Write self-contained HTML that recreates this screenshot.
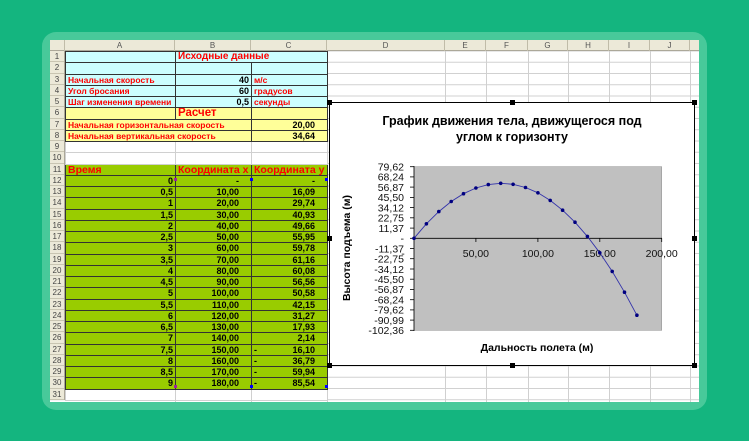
<!DOCTYPE html>
<html><head><meta charset="utf-8"><style>
*{margin:0;padding:0;box-sizing:border-box}
body{width:749px;height:441px;background:#14b57f;position:relative;overflow:hidden;font-family:"Liberation Sans",Arial,sans-serif}
#frame{position:absolute;left:42px;top:32px;width:665px;height:378px;background:#48c99a;border-radius:14px}
#sheet{position:absolute;left:50px;top:40px;width:649px;height:362px;background:#fff;overflow:hidden;
background-image:linear-gradient(#d0d0d0 1px,transparent 1px);background-size:100% 11.26px;background-position:0 10.5px}
.vl{position:absolute;top:0;height:362px;width:1px;background:#d0d0d0}
#colh{position:absolute;left:0;top:0;height:11px;width:649px;background:#ece9d8;border-bottom:1px solid #aca899;font-size:8px;color:#555}
#colh div{position:absolute;top:0;height:11px;line-height:11px;text-align:center;border-right:1px solid #c0bca8}
#rowh{position:absolute;left:0;top:11px;width:15px;background:#ece9d8;border-right:1px solid #aca899}
#rowh div{height:11.26px;line-height:11.26px;font-size:8px;color:#444;text-align:center;border-bottom:1px solid #c9c5b2}
table{position:absolute;left:15px;top:11px;width:262px;border-collapse:collapse;table-layout:fixed}
td{height:11.26px;padding:0 2px;font-size:9px;font-weight:bold;white-space:nowrap;overflow:hidden;line-height:10px;border:1px solid #333}
.c{background:#ccffff}.y{background:#ffff99}.g{background:#99cc00}.w{background:#fff;border-color:#d0d0d0}
.r{color:#f00}.n{text-align:right}
.c.r,.y.r{font-size:8.5px}
.p{padding-right:12px}
</style></head><body>
<div id="frame"></div>
<div id="sheet">
<div class="vl" style="left:125px"></div><div class="vl" style="left:201px"></div><div class="vl" style="left:277px"></div><div class="vl" style="left:395px"></div><div class="vl" style="left:436px"></div><div class="vl" style="left:478px"></div><div class="vl" style="left:518px"></div><div class="vl" style="left:559px"></div><div class="vl" style="left:600px"></div><div class="vl" style="left:640px"></div>
<div id="colh">
<div style="left:0;width:15px"></div><div style="left:15px;width:110px">A</div><div style="left:125px;width:76px">B</div><div style="left:201px;width:76px">C</div><div style="left:277px;width:118px">D</div><div style="left:395px;width:41px">E</div><div style="left:436px;width:42px">F</div><div style="left:478px;width:40px">G</div><div style="left:518px;width:41px">H</div><div style="left:559px;width:41px">I</div><div style="left:600px;width:40px">J</div>
</div>
<div id="rowh">
<div>1</div><div>2</div><div>3</div><div>4</div><div>5</div><div>6</div><div>7</div><div>8</div><div>9</div><div>10</div><div>11</div><div>12</div><div>13</div><div>14</div><div>15</div><div>16</div><div>17</div><div>18</div><div>19</div><div>20</div><div>21</div><div>22</div><div>23</div><div>24</div><div>25</div><div>26</div><div>27</div><div>28</div><div>29</div><div>30</div><div>31</div>
</div>
<table>
<colgroup><col style="width:110px"><col style="width:76px"><col style="width:76px"></colgroup>
<tr><td class="c"></td><td class="c r" colspan="2" style="font-size:10px;overflow:visible">Исходные данные</td></tr>
<tr><td class="c"></td><td class="c"></td><td class="c"></td></tr>
<tr><td class="c r">Начальная скорость</td><td class="c n">40</td><td class="c r">м/с</td></tr>
<tr><td class="c r">Угол бросания</td><td class="c n">60</td><td class="c r">градусов</td></tr>
<tr><td class="c r">Шаг изменения времени</td><td class="c n">0,5</td><td class="c r">секунды</td></tr>
<tr><td class="y"></td><td class="y r" style="font-size:11.5px">Расчет</td><td class="y"></td></tr>
<tr><td class="y r" colspan="2">Начальная горизонтальная скорость</td><td class="y n p">20,00</td></tr>
<tr><td class="y r" colspan="2">Начальная вертикальная скорость</td><td class="y n p">34,64</td></tr>
<tr><td class="w"></td><td class="w"></td><td class="w"></td></tr>
<tr><td class="w"></td><td class="w"></td><td class="w"></td></tr>
<tr><td class="g r" style="font-size:10.5px">Время</td><td class="g r" style="font-size:10.5px">Координата x</td><td class="g r" style="font-size:10.5px">Координата y</td></tr>
<tr><td class="g n">0</td><td class="g n p">-</td><td class="g n p">-</td></tr>
<tr><td class="g n">0,5</td><td class="g n p">10,00</td><td class="g n p">16,09</td></tr>
<tr><td class="g n">1</td><td class="g n p">20,00</td><td class="g n p">29,74</td></tr>
<tr><td class="g n">1,5</td><td class="g n p">30,00</td><td class="g n p">40,93</td></tr>
<tr><td class="g n">2</td><td class="g n p">40,00</td><td class="g n p">49,66</td></tr>
<tr><td class="g n">2,5</td><td class="g n p">50,00</td><td class="g n p">55,95</td></tr>
<tr><td class="g n">3</td><td class="g n p">60,00</td><td class="g n p">59,78</td></tr>
<tr><td class="g n">3,5</td><td class="g n p">70,00</td><td class="g n p">61,16</td></tr>
<tr><td class="g n">4</td><td class="g n p">80,00</td><td class="g n p">60,08</td></tr>
<tr><td class="g n">4,5</td><td class="g n p">90,00</td><td class="g n p">56,56</td></tr>
<tr><td class="g n">5</td><td class="g n p">100,00</td><td class="g n p">50,58</td></tr>
<tr><td class="g n">5,5</td><td class="g n p">110,00</td><td class="g n p">42,15</td></tr>
<tr><td class="g n">6</td><td class="g n p">120,00</td><td class="g n p">31,27</td></tr>
<tr><td class="g n">6,5</td><td class="g n p">130,00</td><td class="g n p">17,93</td></tr>
<tr><td class="g n">7</td><td class="g n p">140,00</td><td class="g n p">2,14</td></tr>
<tr><td class="g n">7,5</td><td class="g n p">150,00</td><td class="g n p"><span style="float:left">-</span>16,10</td></tr>
<tr><td class="g n">8</td><td class="g n p">160,00</td><td class="g n p"><span style="float:left">-</span>36,79</td></tr>
<tr><td class="g n">8,5</td><td class="g n p">170,00</td><td class="g n p"><span style="float:left">-</span>59,94</td></tr>
<tr><td class="g n">9</td><td class="g n p">180,00</td><td class="g n p"><span style="float:left">-</span>85,54</td></tr>
<tr><td class="w"></td><td class="w"></td><td class="w"></td></tr>
</table>
</div>
<svg style="position:absolute;left:0;top:0" width="749" height="441" font-family="Liberation Sans, Arial, sans-serif">
<rect x="329.5" y="102.5" width="365" height="263" fill="#fff" stroke="#000" stroke-width="1"/>
<text x="512" y="125" font-size="12.5" font-weight="bold" text-anchor="middle">График движения тела, движущегося под</text>
<text x="512" y="141" font-size="12.5" font-weight="bold" text-anchor="middle">углом к горизонту</text>
<rect x="414" y="166.7" width="247.7" height="163.6" fill="#c0c0c0" stroke="#888" stroke-width="0.5"/>
<line x1="414" y1="166" x2="414" y2="331" stroke="#000" stroke-width="0.8"/>
<line x1="414" y1="238.3" x2="662" y2="238.3" stroke="#000" stroke-width="0.8"/>
<g stroke="#000" stroke-width="0.8">
<line x1="410" y1="166.7" x2="414" y2="166.7"/><line x1="410" y1="176.9" x2="414" y2="176.9"/><line x1="410" y1="187.1" x2="414" y2="187.1"/><line x1="410" y1="197.4" x2="414" y2="197.4"/><line x1="410" y1="207.6" x2="414" y2="207.6"/><line x1="410" y1="217.8" x2="414" y2="217.8"/><line x1="410" y1="228.1" x2="414" y2="228.1"/><line x1="410" y1="238.3" x2="414" y2="238.3"/><line x1="410" y1="248.5" x2="414" y2="248.5"/><line x1="410" y1="258.7" x2="414" y2="258.7"/><line x1="410" y1="269" x2="414" y2="269"/><line x1="410" y1="279.2" x2="414" y2="279.2"/><line x1="410" y1="289.4" x2="414" y2="289.4"/><line x1="410" y1="299.7" x2="414" y2="299.7"/><line x1="410" y1="309.9" x2="414" y2="309.9"/><line x1="410" y1="320.1" x2="414" y2="320.1"/><line x1="410" y1="330.3" x2="414" y2="330.3"/>
<line x1="475.9" y1="238.3" x2="475.9" y2="242"/><line x1="537.9" y1="238.3" x2="537.9" y2="242"/><line x1="599.8" y1="238.3" x2="599.8" y2="242"/><line x1="661.7" y1="238.3" x2="661.7" y2="242"/>
</g>
<g font-size="10.5" text-anchor="end" fill="#111">
<text x="404" y="170.5">79,62</text><text x="404" y="180.7">68,24</text><text x="404" y="190.9">56,87</text><text x="404" y="201.2">45,50</text><text x="404" y="211.4">34,12</text><text x="404" y="221.6">22,75</text><text x="404" y="231.9">11,37</text><text x="404" y="242.1">-</text><text x="404" y="252.3">-11,37</text><text x="404" y="262.5">-22,75</text><text x="404" y="272.8">-34,12</text><text x="404" y="283">-45,50</text><text x="404" y="293.2">-56,87</text><text x="404" y="303.5">-68,24</text><text x="404" y="313.7">-79,62</text><text x="404" y="323.9">-90,99</text><text x="404" y="334.1">-102,36</text>
</g>
<g font-size="10.5" text-anchor="middle" fill="#111">
<text x="403" y="257">-</text><text x="475.9" y="257">50,00</text><text x="537.9" y="257">100,00</text><text x="599.8" y="257">150,00</text><text x="661.7" y="257">200,00</text>
</g>
<text x="537" y="351" font-size="10.5" font-weight="bold" text-anchor="middle">Дальность полета (м)</text>
<text transform="translate(350,248) rotate(-90)" font-size="10.5" font-weight="bold" text-anchor="middle">Высота подъема (м)</text>
<polyline fill="none" stroke="#3333aa" stroke-width="0.9" points="414,238.3 426.4,223.8 438.8,211.6 451.2,201.5 463.5,193.7 475.9,188 488.3,184.6 500.7,183.3 513.1,184.3 525.5,187.5 537.9,192.8 550.2,200.4 562.6,210.2 575,222.2 587.4,236.4 599.8,252.8 612.2,271.4 624.5,292.2 636.9,315.2"/>
<g fill="#000080">
<circle cx="414" cy="238.3" r="1.8"/><circle cx="426.4" cy="223.8" r="1.8"/><circle cx="438.8" cy="211.6" r="1.8"/><circle cx="451.2" cy="201.5" r="1.8"/><circle cx="463.5" cy="193.7" r="1.8"/><circle cx="475.9" cy="188" r="1.8"/><circle cx="488.3" cy="184.6" r="1.8"/><circle cx="500.7" cy="183.3" r="1.8"/><circle cx="513.1" cy="184.3" r="1.8"/><circle cx="525.5" cy="187.5" r="1.8"/><circle cx="537.9" cy="192.8" r="1.8"/><circle cx="550.2" cy="200.4" r="1.8"/><circle cx="562.6" cy="210.2" r="1.8"/><circle cx="575" cy="222.2" r="1.8"/><circle cx="587.4" cy="236.4" r="1.8"/><circle cx="599.8" cy="252.8" r="1.8"/><circle cx="612.2" cy="271.4" r="1.8"/><circle cx="624.5" cy="292.2" r="1.8"/><circle cx="636.9" cy="315.2" r="1.8"/>
</g>
<g fill="#000">
<rect x="327" y="100" width="5" height="5"/><rect x="510" y="100" width="5" height="5"/><rect x="692" y="100" width="5" height="5"/>
<rect x="327" y="236" width="5" height="5"/><rect x="692" y="236" width="5" height="5"/>
<rect x="327" y="363" width="5" height="5"/><rect x="510" y="363" width="5" height="5"/><rect x="692" y="363" width="5" height="5"/>
</g>
<g fill="#0000ff"><rect x="250" y="178" width="3" height="3"/><rect x="250" y="385" width="3" height="3"/><rect x="325" y="178" width="3" height="3"/><rect x="325" y="385" width="3" height="3"/></g>
<g fill="#a020a0"><rect x="174" y="178" width="3" height="3"/><rect x="174" y="385" width="3" height="3"/></g>
</svg>
</body></html>
